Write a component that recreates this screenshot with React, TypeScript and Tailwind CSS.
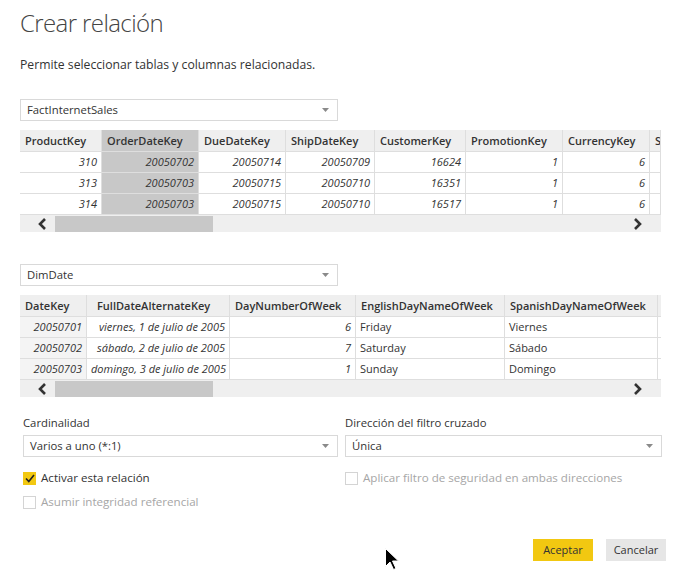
import React from "react";

const font = "font-['Open_Sans','Noto_Sans',sans-serif]";

type Col = { name: string; w: string; align: "r" | "l"; italic?: boolean; hl?: boolean; shade?: boolean; hp?: string };

const factCols: Col[] = [
  { name: "ProductKey", w: "w-[82px]", align: "r", italic: true },
  { name: "OrderDateKey", w: "w-[97px]", align: "r", italic: true, hl: true },
  { name: "DueDateKey", w: "w-[87px]", align: "r", italic: true },
  { name: "ShipDateKey", w: "w-[89px]", align: "r", italic: true },
  { name: "CustomerKey", w: "w-[91px]", align: "r", italic: true },
  { name: "PromotionKey", w: "w-[97px]", align: "r", italic: true },
  { name: "CurrencyKey", w: "w-[87px]", align: "r", italic: true },
  { name: "S", w: "w-[11px]", align: "l" },
];

const factRows = [
  ["310", "20050702", "20050714", "20050709", "16624", "1", "6", ""],
  ["313", "20050703", "20050715", "20050710", "16351", "1", "6", ""],
  ["314", "20050703", "20050715", "20050710", "16517", "1", "6", ""],
];

const dateCols: Col[] = [
  { name: "DateKey", w: "w-[67px]", align: "r", italic: true, shade: true },
  { name: "FullDateAlternateKey", w: "w-[143px]", align: "r", italic: true, hp: "pl-[10px]" },
  { name: "DayNumberOfWeek", w: "w-[126px]", align: "r", italic: true },
  { name: "EnglishDayNameOfWeek", w: "w-[149px]", align: "l" },
  { name: "SpanishDayNameOfWeek", w: "w-[153px]", align: "l" },
  { name: "", w: "w-[3px]", align: "l" },
];

const dateRows = [
  ["20050701", "viernes, 1 de julio de 2005", "6", "Friday", "Viernes", ""],
  ["20050702", "sábado, 2 de julio de 2005", "7", "Saturday", "Sábado", ""],
  ["20050703", "domingo, 3 de julio de 2005", "1", "Sunday", "Domingo", ""],
];

function Caret() {
  return (
    <svg width="7" height="4" viewBox="0 0 7 4" className="shrink-0">
      <path d="M0 0h7L3.5 4z" fill="#8a8a8a" />
    </svg>
  );
}

function Select({ value, className }: { value: string; className: string }) {
  return (
    <div className={`flex h-[22px] items-center justify-between border border-[#d9d9d9] bg-white pl-[6px] pr-[8px] text-[11.3px] text-[#333] ${className}`}>
      <span>{value}</span>
      <Caret />
    </div>
  );
}

function Chevron({ dir }: { dir: "l" | "r" }) {
  return (
    <svg width="10" height="12" viewBox="0 0 10 12" className="shrink-0">
      <path d={dir === "l" ? "M8 1 3 6l5 5" : "M2 1l5 5-5 5"} stroke="#333" strokeWidth="2.6" fill="none" />
    </svg>
  );
}

function DataTable({ cols, rows }: { cols: Col[]; rows: string[][] }) {
  return (
    <div className="w-[641px] overflow-hidden text-[11px] text-[#333]">
      <div className="flex h-[21px] bg-[#efefef]">
        {cols.map((c, i) => (
          <div
            key={i}
            className={`${c.w} shrink-0 overflow-hidden whitespace-nowrap border-r border-[#dedede] ${c.hp ?? "pl-[5px]"} font-semibold leading-[21px] ${c.hl ? "bg-[#c8c8c8]" : ""}`}
          >
            {c.name}
          </div>
        ))}
      </div>
      {rows.map((r, ri) => (
        <div key={ri} className="flex h-[21px] border-l border-[#dedede]">
          {cols.map((c, i) => (
            <div
              key={i}
              className={`${c.w} shrink-0 overflow-hidden whitespace-nowrap border-r border-t border-[#dedede] px-[4px] leading-[20px] ${c.align === "r" ? "text-right" : "text-left"} ${c.italic ? "italic" : ""} ${c.hl ? "bg-[#c8c8c8]" : c.shade ? "bg-[#f4f4f4]" : "bg-white"} ${i === 0 ? "-ml-px" : ""}`}
            >
              {r[i]}
            </div>
          ))}
        </div>
      ))}
      <div className="flex h-[18px] items-center border-t border-[#dedede] bg-[#efefef] pl-[17px] pr-[18px]">
        <Chevron dir="l" />
        <div className="ml-[8px] h-[16px] w-[158px] bg-[#c8c8c8]" />
        <div className="flex-1" />
        <Chevron dir="r" />
      </div>
    </div>
  );
}

function Check({ checked, label, disabled }: { checked?: boolean; label: string; disabled?: boolean }) {
  return (
    <div className="flex h-[18px] items-center gap-[5px] text-[11.6px]">
      {checked ? (
        <div className="flex h-[13px] w-[13px] items-center justify-center bg-[#f2c811]">
          <svg width="10" height="9" viewBox="0 0 10 9">
            <path d="M1 4.5 3.8 7.5 9 1" stroke="#222" strokeWidth="1.6" fill="none" />
          </svg>
        </div>
      ) : (
        <div className="h-[13px] w-[13px] border border-[#d4d4d4] bg-white" />
      )}
      <span className={disabled ? "text-[#a6a6a6]" : "text-[#333]"}>{label}</span>
    </div>
  );
}

export default function App() {
  return (
    <div className={`relative h-[572px] w-[676px] overflow-hidden bg-white ${font}`}>
      <div className="pl-[20px] pt-[6px]">
        <h1 className="text-[24px] font-light leading-[34px] tracking-[-0.6px] text-[#444]">Crear relación</h1>
        <p className="mt-[16px] text-[12.2px] leading-[18px] text-[#333]">
          Permite seleccionar tablas y columnas relacionadas.
        </p>

        <Select value="FactInternetSales" className="mt-[25px] w-[318px]" />
        <div className="mt-[9px]">
          <DataTable cols={factCols} rows={factRows} />
        </div>

        <Select value="DimDate" className="mt-[32px] w-[318px]" />
        <div className="mt-[9px]">
          <DataTable cols={dateCols} rows={dateRows} />
        </div>
      </div>

      <div className="mt-[17px] flex gap-[7px] pl-[23px]">
        <div className="flex w-[315px] flex-col">
          <span className="text-[11.3px] leading-[18px] text-[#333]">Cardinalidad</span>
          <Select value="Varios a uno (*:1)" className="mt-[3px] w-[315px]" />
          <div className="mt-[12px] flex flex-col gap-[6px]">
            <Check checked label="Activar esta relación" />
            <Check disabled label="Asumir integridad referencial" />
          </div>
        </div>
        <div className="flex w-[317px] flex-col">
          <span className="text-[11.3px] leading-[18px] text-[#333]">Dirección del filtro cruzado</span>
          <Select value="Única" className="mt-[3px] w-[317px]" />
          <div className="mt-[12px]">
            <Check disabled label="Aplicar filtro de seguridad en ambas direcciones" />
          </div>
        </div>
      </div>

      <div className="mt-[28px] flex justify-end gap-[13px] pr-[10px]">
        <button className="h-[22px] w-[60px] bg-[#f2c811] text-[11px] text-[#333]">Aceptar</button>
        <button className="h-[22px] w-[60px] bg-[#e6e6e6] text-[11px] text-[#333]">Cancelar</button>
      </div>

      <svg className="absolute left-[385px] top-[548px]" width="14" height="22" viewBox="0 0 14 22">
        <path d="M0.5 0.5v18l4.5-4.5 3.5 7.5 2.5-1-3.5-7.5h6z" fill="#000" stroke="#fff" strokeWidth="1" />
      </svg>
    </div>
  );
}
